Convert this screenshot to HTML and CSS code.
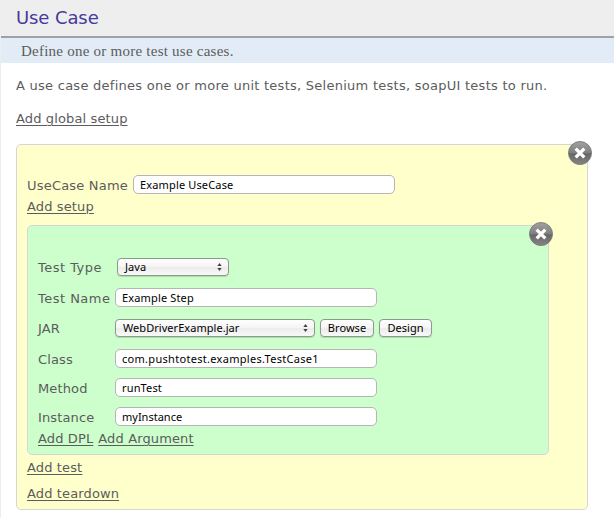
FILE: index.html
```html
<!DOCTYPE html>
<html lang="en">
<head>
<meta charset="utf-8">
<title>Use Case</title>
<link rel="stylesheet" href="styles.css">
</head>
<body>
<svg class="defs" width="0" height="0" aria-hidden="true">
  <defs>
    <linearGradient id="ball" x1="0" y1="0" x2="0" y2="1">
      <stop offset="0" stop-color="#a2a2a2"/>
      <stop offset=".48" stop-color="#808080"/>
      <stop offset=".54" stop-color="#666"/>
      <stop offset="1" stop-color="#858585"/>
    </linearGradient>
    <symbol id="close" viewBox="0 0 24 24">
      <circle cx="12" cy="12" r="11.5" fill="url(#ball)" stroke="#787878" stroke-width=".9"/>
      <path d="M7.7 7.7l8.6 8.6M16.3 7.7l-8.6 8.6" stroke="#fff" stroke-width="3.3"/>
    </symbol>
    <symbol id="arrows" viewBox="0 0 5 8">
      <path d="M2.5 0L4.7 3H.3zM2.5 8L.3 5h4.4z" fill="#444"/>
    </symbol>
  </defs>
</svg>
<header class="title"><h1>Use Case</h1></header>
<div class="page">
  <p class="subtitle">Define one or more test use cases.</p>
  <main>
    <p class="intro">A use case defines one or more unit tests, Selenium tests, soapUI tests to run.</p>
    <p class="global"><a>Add global setup</a></p>
    <section class="usecase">
      <svg class="close"><use href="#close"/></svg>
      <div class="name"><label>UseCase Name</label><div class="input">Example UseCase</div></div>
      <div class="setup"><a>Add setup</a></div>
      <section class="test">
        <svg class="close"><use href="#close"/></svg>
        <div class="fields">
          <label class="wide">Test Type</label>
          <div class="select type"><span>Java</span><svg><use href="#arrows"/></svg></div>
          <label class="wide">Test Name</label>
          <div class="input">Example Step</div>
          <label>JAR</label>
          <div class="jar">
            <div class="select"><span>WebDriverExample.jar</span><svg><use href="#arrows"/></svg></div>
            <button class="browse">Browse</button>
            <button class="design">Design</button>
          </div>
          <label>Class</label>
          <div class="input path">com.pushtotest.examples.TestCase1</div>
          <label>Method</label>
          <div class="input">runTest</div>
          <label>Instance</label>
          <div class="input instance">myInstance</div>
        </div>
        <div class="links"><a>Add DPL</a><a>Add Argument</a></div>
      </section>
      <div class="addtest"><a>Add test</a></div>
      <div class="teardown"><a>Add teardown</a></div>
    </section>
  </main>
</div>
</body>
</html>
```
FILE: styles.css
```css
* { box-sizing: border-box; }
body {
  margin: 0;
  height: 518px;
  overflow: hidden;
  background: #fff;
  color: #5c5c5c;
  font: 13px/16px "DejaVu Sans", sans-serif;
  letter-spacing: .13px;
  white-space: nowrap;
}
.defs { display: block; }
h1, p { margin: 0; }
a { text-decoration: underline; text-underline-offset: 2px; text-decoration-thickness: 1px; }
.title { height: 36px; padding: 6px 16px; background: #eee; }
h1 { color: #443a9c; font-size: 18px; line-height: 24px; font-weight: normal; letter-spacing: -.1px; }
.page { height: 482px; border-left: 1px solid #eee; }
.subtitle {
  height: 27px;
  padding-left: 20px;
  border-top: 2px solid #a0a0a8;
  background: #e2ecf6;
  font: 15px/26px "Liberation Serif", serif;
  letter-spacing: .24px;
}
main { padding: 0 26px 0 15px; }
.intro { padding-top: 15px; height: 48px; letter-spacing: .26px; }
.global { height: 33px; }
.usecase {
  position: relative;
  width: 572px;
  height: 366px;
  padding: 30px 10px 0;
  border: 1px solid #d6d6d6;
  border-radius: 5px;
  background: #ffffcc;
}
.close { position: absolute; top: -4px; right: -5px; width: 24px; height: 24px; }
label { padding-top: 2px; }
.name { display: flex; height: 19px; align-items: center; gap: 5px; }
.name label { width: 101px; letter-spacing: .2px; }
.wide { letter-spacing: .48px; }
.input {
  width: 262px;
  height: 19px;
  padding-left: 6px;
  border: 1px solid #b5b5b5;
  border-radius: 5px;
  background: #fff;
  color: #000;
  font: 11px/18px "Noto Sans", sans-serif;
  letter-spacing: .15px;
}
.path { letter-spacing: .3px; }
.instance { letter-spacing: 0; }
.setup { height: 31px; padding-top: 5px; }
.test {
  position: relative;
  width: 522px;
  height: 230px;
  padding: 26px 10px 0;
  border: 1px solid #d6d6d6;
  border-radius: 5px;
  background: #ccffcc;
}
.fields {
  display: grid;
  grid-template-columns: 77px 1fr;
  grid-template-rows: 30px 31px 30px 31px 27px 31px;
  align-items: center;
}
.select, button {
  display: flex;
  align-items: center;
  height: 18px;
  border: 1px solid #8c9a8c;
  border-radius: 4px;
  background: linear-gradient(#fff, #f4f4f4 50%, #ececec 51%, #f8f8f8);
  box-shadow: 0 1px 1px rgba(0, 0, 0, .15);
  color: #000;
  font: 11px/16px "Noto Sans", sans-serif;
  letter-spacing: .05px;
}
.select { justify-content: space-between; width: 200px; padding: 0 6px 0 7px; }
.select svg { width: 5px; height: 8px; }
.type { width: 112px; margin-left: 2px; }
.jar { display: flex; gap: 5px; }
button { justify-content: center; padding: 0; }
.browse { width: 54px; }
.design { width: 53px; }
.links { display: flex; gap: 5px; height: 14px; line-height: 14px; }
.addtest { padding-top: 5px; height: 30px; }
.teardown { padding-top: 1px; }
```
